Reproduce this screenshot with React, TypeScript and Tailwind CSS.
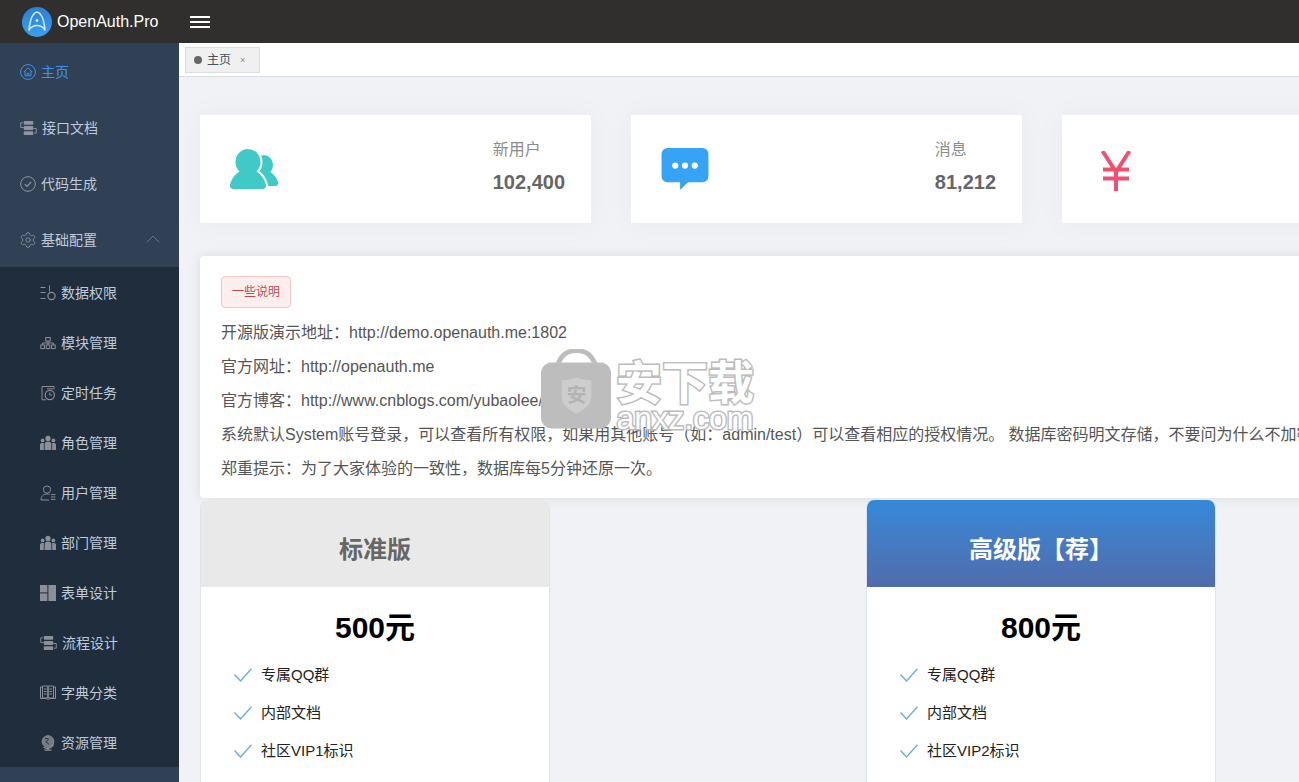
import { ChevronUp, Settings } from "lucide-react";
import type { ReactNode } from "react";

const font = "font-['Liberation_Sans','Noto_Sans_CJK_SC',sans-serif]";

function Ico({ children, className = "" }: { children: ReactNode; className?: string }) {
  return (
    <svg viewBox="0 0 16 16" className={"h-4 w-4 shrink-0 " + className} fill="none" stroke="currentColor" strokeWidth="1">
      {children}
    </svg>
  );
}

const HomeIcon = () => (
  <Ico>
    <circle cx="8" cy="8" r="7.400" />
    <path d="M3.800 8 8 3.800 12.200 8M5 7v4.800h6V7M7 11.800V9.300h2v2.500" />
  </Ico>
);

const FlowIcon = () => (
  <svg viewBox="0 0 18 16" className="h-4 w-[17px] shrink-0" fill="none" stroke="currentColor">
    <rect x="4" y="0.500" width="10" height="4" rx="1" fill="currentColor" stroke="none" />
    <rect x="4" y="11.500" width="10" height="4" rx="1" fill="currentColor" stroke="none" />
    <rect x="4" y="6" width="10" height="4" rx="1" fill="currentColor" stroke="none" />
    <path d="M3 2.500H.8v5H4M15 13.500h2.200v-5H14" />
  </svg>
);

const CheckCircleIcon = () => (
  <Ico>
    <circle cx="8" cy="8" r="7.300" />
    <path d="m4.800 8.200 2.200 2.200 4.200-4.400" strokeWidth="1.200" />
  </Ico>
);

const RulesIcon = () => (
  <Ico>
    <path d="M.5 2.500h5M.5 7.500h5M.5 13.500h5M9.500.5v6" />
    <circle cx="11.500" cy="11" r="3.600" strokeWidth="1.200" />
  </Ico>
);

const OrgIcon = () => (
  <Ico>
    <rect x="5.800" y="2.500" width="4.400" height="3.600" />
    <rect x="0.800" y="10" width="3.600" height="3.600" />
    <rect x="6.200" y="10" width="3.600" height="3.600" />
    <rect x="11.600" y="10" width="3.600" height="3.600" />
    <path d="M8 6.100V10M2.600 10V8h10.800v2" />
  </Ico>
);

const TimerIcon = () => (
  <Ico>
    <path d="M6 14.800H2V1.500h12v3" />
    <circle cx="9.800" cy="10" r="4.600" strokeWidth="1.200" />
    <path d="M9.800 7.500V10h2.200M7 3.800h6" />
  </Ico>
);

const GroupIcon = () => (
  <svg viewBox="0 0 16 16" className="h-4 w-4 shrink-0" fill="currentColor">
    <circle cx="8" cy="3.400" r="2.600" />
    <circle cx="2.600" cy="5.400" r="1.900" />
    <circle cx="13.400" cy="5.400" r="1.900" />
    <path d="M4.600 15V9.200c0-1.800 1.200-2.600 3.400-2.600s3.400.8 3.400 2.600V15zM0 15V9.600c0-1 .8-1.700 2.600-1.700.5 0 .8 0 1.200.1V15zM16 15V9.600c0-1-.8-1.700-2.600-1.700-.5 0-.8 0-1.200.1V15z" />
  </svg>
);

const UserLinesIcon = () => (
  <Ico>
    <circle cx="7" cy="4.600" r="3.600" />
    <path d="M1 15c0-3.500 2.400-6 6-6 1 0 1.800.2 2.500.5M1 15h8M11 9.600h4.500M11 12h4.500M11 14.400h4.500" />
  </Ico>
);

const BlocksIcon = () => (
  <svg viewBox="0 0 16 16" className="h-4 w-4 shrink-0" fill="currentColor">
    <rect x="0" y="0" width="7.400" height="7.400" />
    <rect x="0" y="8.400" width="7.400" height="7.600" />
    <rect x="8.400" y="0" width="7.600" height="16" />
  </svg>
);

const BookIcon = () => (
  <Ico>
    <path d="M2.500 2H.5v11.500h6l1.500 1 1.500-1h6V2h-2" />
    <path d="M2.500 1h5.200v12H2.500zM8.300 1h5.200v12H8.300z" />
    <path d="M4 4h2.500M4 6.500h2.500M4 9h2.500M9.500 4H12M9.500 6.500H12M9.500 9H12" />
  </Ico>
);

const GlobeIcon = () => (
  <svg viewBox="0 0 16 16" className="h-4 w-4 shrink-0" fill="none" stroke="currentColor">
    <circle cx="8" cy="6.500" r="5.800" fill="currentColor" fillOpacity="0.8" />
    <path d="M5 3.200c1.400.5 2.800.2 3.500 1.200-.5 1.400-2 1-2.500 2.400.8 1 2.200.8 2.600 2.600" fill="none" stroke="#1f2d3d" />
    <path d="M13.600 9.500A6.600 6.600 0 0 1 3.500 12M8 13v1.600M4.500 15.200h7" strokeWidth="1.200" />
  </svg>
);

const subMenu: { label: string; icon: ReactNode }[] = [
  { label: "数据权限", icon: <RulesIcon /> },
  { label: "模块管理", icon: <OrgIcon /> },
  { label: "定时任务", icon: <TimerIcon /> },
  { label: "角色管理", icon: <GroupIcon /> },
  { label: "用户管理", icon: <UserLinesIcon /> },
  { label: "部门管理", icon: <GroupIcon /> },
  { label: "表单设计", icon: <BlocksIcon /> },
  { label: "流程设计", icon: <FlowIcon /> },
  { label: "字典分类", icon: <BookIcon /> },
  { label: "资源管理", icon: <GlobeIcon /> },
];

function Sidebar() {
  return (
    <aside className="flex w-[179px] shrink-0 flex-col bg-[#304156] text-sm text-[#bfcbd9]">
      <div className="flex h-14 items-center gap-[5px] pl-5 pt-[2px] text-[#3f92f2]">
        <HomeIcon />
        <span>主页</span>
      </div>
      <div className="flex h-14 items-center gap-[5px] pl-5 pt-[2px]">
        <span className="text-[#8f959e]"><FlowIcon /></span>
        <span>接口文档</span>
      </div>
      <div className="flex h-14 items-center gap-[5px] pl-5 pt-[2px]">
        <span className="text-[#8f959e]"><CheckCircleIcon /></span>
        <span>代码生成</span>
      </div>
      <div className="flex h-14 items-center pl-5 pt-[2px]">
        <Settings className="-ml-px mr-1 h-[18px] w-[18px] text-[#8f959e]" strokeWidth={1.1} />
        <span>基础配置</span>
        <ChevronUp className="ml-auto mr-[14px] h-6 w-6 -translate-y-px text-[#66758a]" strokeWidth={1} />
      </div>
      <div className="flex flex-col bg-[#1f2d3d]">
        {subMenu.map((item) => (
          <div key={item.label} className="flex h-[50px] items-center gap-[5px] pl-10 pt-[2px]">
            <span className="text-[#8a8f98]">{item.icon}</span>
            <span>{item.label}</span>
          </div>
        ))}
      </div>
    </aside>
  );
}

function StatCard({ icon, label, value }: { icon: ReactNode; label?: string; value?: string }) {
  return (
    <div className="flex h-[108px] w-[391px] shrink-0 items-start justify-between bg-white shadow-[0_0_30px_rgba(0,0,0,0.04)]">
      <div className="flex h-[108px] w-[80px] items-center justify-center pl-[28px]">{icon}</div>
      {label && (
        <div className="mr-[26px] mt-[24px] text-left">
          <div className="text-base leading-[22px] text-[#8c8c8c]">{label}</div>
          <div className="mt-[10px] text-xl font-bold leading-[22px] text-[#666666]">{value}</div>
        </div>
      )}
    </div>
  );
}

function PriceCard({ title, price, vip, featured }: { title: string; price: string; vip: string; featured?: boolean }) {
  return (
    <div className="w-[350px] shrink-0 overflow-hidden rounded-t-lg border-x border-[#dfe3ea] bg-white">
      <div
        className={
          "-mx-px flex h-[87px] items-center justify-center pt-[13px] text-2xl font-bold " +
          (featured ? "bg-gradient-to-b from-[#3389d9] to-[#4f6cab] text-white" : "bg-[#e9e9e9] text-[#666666]")
        }
      >
        {title}
      </div>
      <div className="pt-[23px] text-center text-[30px] font-bold leading-9 text-black">{price}</div>
      <ul className="mt-[10px] pb-10 pl-[33px] text-[15px] text-[#222222]">
        {["专属QQ群", "内部文档", vip].map((row) => (
          <li key={row} className="flex h-[38px] items-center gap-[9px]">
            <svg viewBox="0 0 18 14" className="h-[14px] w-[18px]" fill="none" stroke="#6aaed6" strokeWidth="1.400">
              <path d="m.5 6.500 6 6.500L17.500.8" />
            </svg>
            {row}
          </li>
        ))}
      </ul>
    </div>
  );
}

function Watermark() {
  return (
    <div className="pointer-events-none absolute left-[541px] top-[349px] flex items-start gap-[4px]">
      <svg viewBox="0 0 72 80" className="h-20 w-[71px]">
        <path d="M17 16C20 5 28 1 36 1s16 4 19 15" fill="none" stroke="#bdbdbd" strokeWidth="5" />
        <rect x="0" y="13" width="71" height="67" rx="11" fill="#bdbdbd" />
        <path d="M21 31c6 0 11-1 15-3 4 2 9 3 15 3v17c0 8-7 13-15 17-8-4-15-9-15-17z" fill="#cdcdcd" />
        <text x="36" y="53" textAnchor="middle" fontSize="20" fontWeight="700" fill="#b3b3b3">安</text>
      </svg>
      <div className="mt-[8px] flex flex-col items-center text-white [paint-order:stroke_fill] [-webkit-text-stroke:3px_#bcbcbc]">
        <span className="text-[46px] font-bold leading-[52px]">安下载</span>
        <span className="-mt-[3px] text-[32px] leading-[24px]">anxz.com</span>
      </div>
    </div>
  );
}

export default function App() {
  return (
    <div className={"relative flex h-[782px] w-[1299px] flex-col overflow-hidden bg-[#f0f2f6] " + font}>
      <header className="flex h-[43px] shrink-0 items-center bg-[#302f2d] text-white">
        <div className="flex w-[190px] items-center pl-[22px]">
          <svg viewBox="0 0 30 30" className="h-[30px] w-[30px] shrink-0">
            <defs>
              <linearGradient id="logoFill" x1="0" y1="0" x2="0" y2="1">
                <stop offset="0" stopColor="#2a7fd6" />
                <stop offset="1" stopColor="#3aa0ee" />
              </linearGradient>
            </defs>
            <circle cx="15" cy="15" r="15" fill="url(#logoFill)" />
            <path d="M7 23C8 13 11 6 15 5c4 1 7 8 8 18-2-3-4.500-4.500-8-4.500S9 20 7 23z" fill="none" stroke="#dbeafa" strokeWidth="1.500" strokeLinejoin="round" />
            <circle cx="15" cy="13.500" r="1.400" fill="#dbeafa" />
          </svg>
          <span className="ml-[5px] whitespace-nowrap text-base">OpenAuth.Pro</span>
        </div>
        <div className="flex w-5 flex-col gap-[3px]">
          <span className="h-0.5 bg-white" />
          <span className="h-0.5 bg-white" />
          <span className="h-0.5 bg-white" />
        </div>
      </header>
      <div className="flex min-h-0 flex-1">
        <Sidebar />
        <main className="min-w-0 flex-1 overflow-hidden">
          <div className="flex h-[34px] items-center border-b border-[#d8dce5] bg-white pl-[6px]">
            <div className="flex h-[26px] w-[75px] items-center border border-[#d8dce5] bg-[#f0f0f0] pl-2 text-xs text-[#495060]">
              <span className="mr-[5px] h-2 w-2 rounded-full bg-[#666666]" />
              主页
              <span className="ml-[9px] text-[9px] text-[#888888]">×</span>
            </div>
          </div>
          <div className="pl-[21px] pt-[38px]">
            <div className="flex gap-10">
              <StatCard
                label="新用户"
                value="102,400"
                icon={
                  <svg viewBox="0 0 48 40" className="h-10 w-12 shrink-0" fill="#40c9c6">
                    <ellipse cx="34" cy="16" rx="9" ry="10" />
                    <path d="M30 22h8c5 2 8.500 6 10 11 .5 2-.5 4-2.500 4H32z" />
                    <g stroke="#fff" strokeWidth="4">
                      <ellipse cx="18" cy="13" rx="12.500" ry="13" />
                      <path d="M0 36c1.500-7 6-12 12-15h12c6 3 10.500 8 12 15 .5 2-1 4-3 4H3c-2 0-3.500-2-3-4z" />
                    </g>
                    <ellipse cx="18" cy="13" rx="12.500" ry="13" />
                    <path d="M0 36c1.500-7 6-12 12-15h12c6 3 10.500 8 12 15 .5 2-1 4-3 4H3c-2 0-3.500-2-3-4z" />
                  </svg>
                }
              />
              <StatCard
                label="消息"
                value="81,212"
                icon={
                  <svg viewBox="0 0 48 44" className="h-[43px] w-12 shrink-0" fill="#36a3f7">
                    <path d="M6 0h36a6 6 0 0 1 6 6v23a6 6 0 0 1-6 6H27l-8 8v-8H6a6 6 0 0 1-6-6V6a6 6 0 0 1 6-6z" />
                    <circle cx="14" cy="18" r="3.200" fill="#fff" />
                    <circle cx="24" cy="18" r="3.200" fill="#fff" />
                    <circle cx="34" cy="18" r="3.200" fill="#fff" />
                  </svg>
                }
              />
              <StatCard
                icon={
                  <svg viewBox="0 0 30 40" className="mt-[3px] h-10 w-[30px] shrink-0" fill="none" stroke="#f0506e" strokeWidth="4">
                    <path d="m1.500 0 13.500 21L28.500 0M15 21v19M2 18.500h26M2 27.500h26" />
                  </svg>
                }
              />
            </div>
            <section className="mt-[33px] h-[242px] w-[1200px] rounded bg-white pl-[21px] pt-5 text-base text-[#555555] shadow-[0_0_12px_rgba(0,0,0,0.1)]">
              <span className="inline-flex h-8 items-center rounded border border-[#f5c6c6] bg-[#fdeeee] px-[10px] text-xs text-[#b94a55]">
                一些说明
              </span>
              <div className="mt-2 whitespace-nowrap leading-[34px]">
                <p>开源版演示地址：http://demo.openauth.me:1802</p>
                <p>官方网址：http://openauth.me</p>
                <p>官方博客：http://www.cnblogs.com/yubaolee/</p>
                <p>系统默认System账号登录，可以查看所有权限，如果用其他账号（如：admin/test）可以查看相应的授权情况。 数据库密码明文存储，不要问为什么不加密</p>
                <p>郑重提示：为了大家体验的一致性，数据库每5分钟还原一次。</p>
              </div>
            </section>
            <div className="mt-[2px] flex gap-[316px]">
              <PriceCard title="标准版" price="500元" vip="社区VIP1标识" />
              <PriceCard title="高级版【荐】" price="800元" vip="社区VIP2标识" featured />
            </div>
          </div>
        </main>
      </div>
      <Watermark />
    </div>
  );
}
